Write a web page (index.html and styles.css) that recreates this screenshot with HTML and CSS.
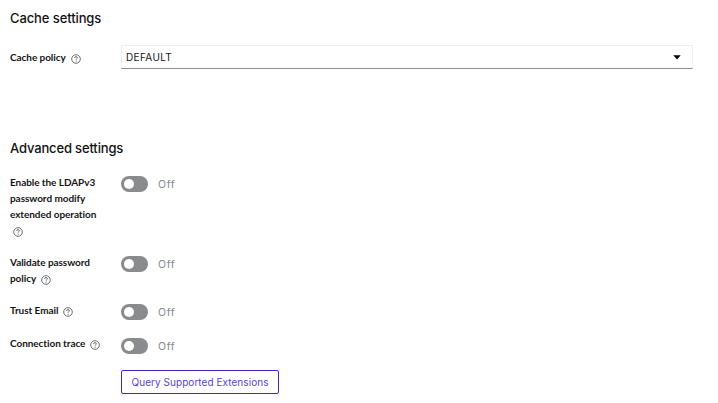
FILE: index.html
```html
<!DOCTYPE html>
<html lang="en">
<head>
<meta charset="utf-8">
<title>User federation settings</title>
<link rel="stylesheet" href="styles.css">
</head>
<body>
<svg class="defs" width="0" height="0" aria-hidden="true">
  <symbol id="help" viewBox="0 0 10 10">
    <circle cx="5" cy="5" r="4.3" fill="none" stroke="#5b5d60" stroke-width=".9"/>
    <path d="M3.6 4c0-.9.6-1.4 1.4-1.4s1.4.5 1.4 1.2c0 .9-1.3.9-1.3 1.9" fill="none" stroke="#5b5d60" stroke-width=".9"/>
    <circle cx="5.1" cy="7.1" r=".6" fill="#5b5d60"/>
  </symbol>
</svg>
<main>
  <section class="cache">
    <h2>Cache settings</h2>
    <div class="row policy">
      <div class="label">Cache policy<svg class="help"><use href="#help"/></svg></div>
      <div class="select"><span>DEFAULT</span><svg class="caret" viewBox="0 0 8 5"><path d="M.3.3h7.4L4 4.5z"/></svg></div>
    </div>
  </section>
  <section>
    <h2 class="advanced">Advanced settings</h2>
    <div class="row ldap">
      <div class="label">Enable the LDAPv3<br>password modify<br>extended operation<br><svg class="help first"><use href="#help"/></svg></div>
      <div class="control"><span class="switch"></span><span class="off">Off</span></div>
    </div>
    <div class="row validate">
      <div class="label">Validate password<br>policy<svg class="help"><use href="#help"/></svg></div>
      <div class="control"><span class="switch"></span><span class="off">Off</span></div>
    </div>
    <div class="row trust">
      <div class="label">Trust Email<svg class="help"><use href="#help"/></svg></div>
      <div class="control"><span class="switch"></span><span class="off">Off</span></div>
    </div>
    <div class="row trace">
      <div class="label">Connection trace<svg class="help"><use href="#help"/></svg></div>
      <div class="control"><span class="switch"></span><span class="off">Off</span></div>
    </div>
    <button class="query" type="button">Query Supported Extensions</button>
  </section>
</main>
</body>
</html>
```
FILE: styles.css
```css
* { box-sizing: border-box; }
body { margin: 0; background: #fff; color: #151515; font-family: Lato, "Open Sans", sans-serif; }
.defs { position: absolute; }
main { padding: 8px 25px 0 10px; }
h2 { margin: 0; height: 20px; font: 500 13px/21px Inter, sans-serif; letter-spacing: -.1px; white-space: nowrap; color: #111; }
h2.advanced { letter-spacing: -.15px; }
.cache { height: 130px; }
.row { display: grid; grid-template-columns: 111px 1fr; align-items: start; }
.policy { margin-top: 17px; }
.policy .label { padding-top: 4px; }
.label { font: 700 10px/16px Lato, sans-serif; letter-spacing: -.06px; white-space: nowrap; }
.help { width: 10px; height: 10px; margin-left: 5px; vertical-align: -2.5px; }
.help.first { margin-left: 2.5px; }
.select { display: flex; align-items: center; justify-content: space-between; height: 24px; padding: 1px 11px 0 4px; border: 1px solid #ededed; border-bottom-color: #8a8d90; font: 400 10px/21px Inter, sans-serif; letter-spacing: .38px; }
.caret { width: 8px; height: 5px; }
.ldap { margin-top: 16px; height: 80px; }
.validate { height: 48px; }
.trust { height: 33px; }
.trace { height: 35px; }
.control { display: flex; align-items: center; gap: 10px; height: 17px; margin-top: 1px; }
.trace .control { margin-top: 2px; }
.switch { width: 27px; height: 16px; border-radius: 8px; background: #8a8b8f; padding: 3px; }
.switch::before { content: ""; display: block; width: 10px; height: 10px; border-radius: 50%; background: #fff; }
.off { padding-top: 2px; font: 400 10.5px/16px Inter, sans-serif; color: #85878b; letter-spacing: .6px; }
.query { display: block; margin: 0 0 0 111px; width: 158px; height: 24px; padding: 0; border: 1px solid #4325c9; border-radius: 2px; background: #fff; color: #5a3fd0; font: 400 10px/22px Inter, sans-serif; letter-spacing: .05px; white-space: nowrap; }
```
